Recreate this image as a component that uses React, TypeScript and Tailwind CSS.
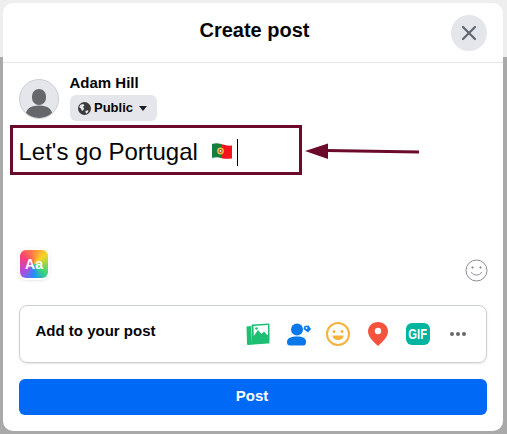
import { X } from 'lucide-react';

function GlobeIcon() {
  return (
    <svg width="13" height="13" viewBox="0 0 16 16">
      <circle cx="8" cy="8" r="8" fill="#3a3b3c" />
      <path d="M3 3.500 6.500 2.500 8 4 6 6 7.500 7.500 7 9.500 5 11 3.500 8 1.500 6.500Z" fill="#e4e6eb" />
      <path d="M9 11 12 10 13 11 11 14 9.500 13.500Z" fill="#e4e6eb" />
    </svg>
  );
}

function FlagIcon() {
  return (
    <svg width="22" height="18" viewBox="0 0 22 18">
      <path d="M1 2C4 1 7 1 10 2V16C7 15 4 15 1 16Z" fill="#15803d" />
      <path d="M10 2C13 3 17 4 21 3.500V16.500C17 17 13 17 10 16Z" fill="#f5141c" />
      <circle cx="9.500" cy="9" r="3.400" fill="#e8c23a" />
      <circle cx="9.500" cy="9" r="2" fill="#c9453f" />
      <circle cx="9.500" cy="9" r="0.900" fill="#f2f2f2" />
    </svg>
  );
}

function PhotoIcon() {
  return (
    <svg width="24" height="22" viewBox="0 0 24 22">
      <path d="M0.500 3.500 5 3 6 20 7.500 21.500 2.500 22C1.500 22 1 21.500 1 20.500Z" fill="#1dbf73" />
      <path d="M6.500 1.500 22 0.500C23 0.500 23.500 1 23.500 2L23.500 19C23.500 20 23 20.500 22 20.500L7.500 21.500C6.500 21.500 6 21 6 20L5.500 2.500C5.500 2 6 1.500 6.500 1.500Z" fill="#1dbf73" />
      <path d="M7.500 3 22 2V12L7.800 13Z" fill="#ffffff" />
      <path d="M7.800 13 12 7 15.500 11 18 8.500 22 13V19L8 20Z" fill="#1dbf73" />
      <circle cx="10.500" cy="5.500" r="1.300" fill="#1dbf73" />
    </svg>
  );
}

function TagIcon() {
  return (
    <svg width="24" height="23" viewBox="0 0 24 23">
      <circle cx="10" cy="6.500" r="6" fill="#0a78e8" />
      <path d="M0 19C0 15 4 13.500 10 13.500S19 15 19 19C19 21.500 18 22.500 16 22.500H3C1 22.500 0 21.500 0 19Z" fill="#0a78e8" />
      <path d="M17.500 3 21.500 2.500 24 6 21 9.500 16.500 6Z" fill="#0a78e8" />
      <circle cx="19.500" cy="5" r="1" fill="#ffffff" />
    </svg>
  );
}

function FeelingIcon() {
  return (
    <svg width="24" height="24" viewBox="0 0 24 24">
      <circle cx="12" cy="12" r="11" fill="#fff" stroke="#f7b13c" strokeWidth="2" />
      <circle cx="8" cy="9.500" r="1.500" fill="#f7b13c" />
      <circle cx="16" cy="9.500" r="1.500" fill="#f7b13c" />
      <path d="M6.500 13.500H17.500C17.500 16.500 15 18 12 18S6.500 16.500 6.500 13.500Z" fill="#f7b13c" />
    </svg>
  );
}

function PinIcon() {
  return (
    <svg width="20" height="24" viewBox="0 0 20 24">
      <path d="M10 0C4.500 0 0 4 0 9.500 0 15 6 20.500 10 24 14 20.500 20 15 20 9.500 20 4 15.500 0 10 0Z" fill="#f5533d" />
      <circle cx="10" cy="9" r="3.200" fill="#ffffff" />
    </svg>
  );
}

function EmojiOutline() {
  return (
    <svg width="23" height="23" viewBox="0 0 23 23" fill="none" stroke="#8a8d91" strokeWidth="1">
      <circle cx="11.500" cy="11.500" r="10.500" />
      <path d="M6.500 13.500C8 17 15 17 16.500 13.500" strokeLinecap="round" />
      <circle cx="7.500" cy="8.500" r="0.700" fill="#8a8d91" />
      <circle cx="15.500" cy="8.500" r="0.700" fill="#8a8d91" />
    </svg>
  );
}

function ArrowAnnotation() {
  return (
    <svg width="116" height="18" viewBox="0 0 116 18" className="absolute left-[304px] top-[143px]">
      <path d="M22 7.500 115 9" stroke="#6b0a2a" strokeWidth="3" fill="none" />
      <path d="M1 8 24 0.500V16Z" fill="#6b0a2a" />
    </svg>
  );
}

export default function App() {
  return (
    <div className="relative h-[434px] w-[507px] overflow-hidden bg-[#a9a9a9] font-['Liberation_Sans',sans-serif] text-[#050505]">
      {/* 뒤 배경 */}
      <div className="absolute inset-x-0 top-0 h-[57px] bg-[#eeeeee]" />

      {/* 모달 */}
      <div className="absolute left-[3px] top-[3px] flex h-[428px] w-[500px] flex-col rounded-[10px] bg-white">
        <div className="relative flex h-[60px] items-center justify-center border-b border-[#e4e6eb] pb-[6px] pl-[3px]">
          <h1 className="text-[20px] font-bold leading-6">Create post</h1>
          <button className="absolute right-[16px] top-[12px] flex h-9 w-9 items-center justify-center rounded-full bg-[#e4e6eb]">
            <X size={24} strokeWidth={2.2} className="text-[#606770]" />
          </button>
        </div>

        <div className="flex gap-[11px] px-4 pt-[12px]">
          <div className="mt-[4px] h-10 w-10 overflow-hidden rounded-full border border-[#ccd0d5] bg-[#e4e6eb]">
            <svg width="38" height="38" viewBox="1 1 38 38">
              <rect x="13" y="10" width="14" height="16" rx="7" fill="#65676b" />
              <path d="M6 40C6 30 11 26.500 20 26.500S34 30 34 40Z" fill="#65676b" />
            </svg>
          </div>
          <div className="flex flex-col items-start">
            <span className="-ml-[0.5px] text-[15px] font-bold leading-[16px]">Adam Hill</span>
            <div className="mt-[4px] flex h-[26px] w-[87px] items-center gap-[3px] rounded-md bg-[#e4e6eb] pl-2">
              <GlobeIcon />
              <span className="text-[13px] font-bold leading-4 text-[#050505]">Public</span>
              <span className="ml-[3px] h-0 w-0 border-x-[4.500px] border-t-[5px] border-x-transparent border-t-[#1c1e21]" />
            </div>
          </div>
        </div>

        <div className="flex items-center pl-4 pt-[14px]">
          <span className="-ml-[0.5px] text-[24px] leading-[34px]">Let's go Portugal</span>
          <span className="mb-[2px] ml-[13px]"><FlagIcon /></span>
          <span className="ml-[4px] h-[27px] w-px bg-[#050505]" />
        </div>

        <div className="flex items-end justify-between pl-[17px] pr-4 pt-[81px]">
          <div className="flex h-[28px] w-[28px] items-center justify-center rounded-md bg-[conic-gradient(#ff8a3d,#f9d423_50deg,#37d67a_130deg,#1e90ff_180deg,#b14be0_235deg,#ff3d77_300deg,#ff8a3d)] text-[14px] font-bold text-white shadow-[0_0_0_2px_#fff,0_1px_4px_rgba(0,0,0,0.25)]">
            Aa
          </div>
          <span className="-mb-[4px] mr-[-1px]"><EmojiOutline /></span>
        </div>

        <div className="mx-4 mt-[27px] flex h-[58px] items-center justify-between rounded-lg border border-[#ccd0d5] pl-4 pr-[20px] shadow-[0_1px_2px_rgba(0,0,0,0.1)]">
          <span className="mb-[6px] -ml-[0.5px] text-[15px] font-bold">Add to your post</span>
          <div className="flex items-center">
            <PhotoIcon />
            <span className="ml-[17px]"><TagIcon /></span>
            <span className="ml-[15px]"><FeelingIcon /></span>
            <span className="ml-[18px]"><PinIcon /></span>
            <span className="ml-[18px] flex h-[22px] w-[24px] items-center justify-center rounded-[6px] bg-[#00b5a0] text-[14px] font-bold leading-none text-white">
              <span className="scale-x-[0.8]">GIF</span>
            </span>
            <span className="ml-[20px] flex gap-[2px]">
              <i className="h-1 w-1 rounded-full bg-[#65676b]" />
              <i className="h-1 w-1 rounded-full bg-[#65676b]" />
              <i className="h-1 w-1 rounded-full bg-[#65676b]" />
            </span>
          </div>
        </div>

        <button className="mx-4 mt-[16px] flex h-9 items-center justify-center rounded-md bg-[#0069f5] pb-[2px] pr-[2px] text-[15px] font-bold text-white">
          Post
        </button>
      </div>

      {/* 주석 표시 */}
      <div className="absolute left-[10px] top-[125px] h-[50px] w-[292px] border-[3px] border-[#6b0a2a]" />
      <ArrowAnnotation />
    </div>
  );
}
